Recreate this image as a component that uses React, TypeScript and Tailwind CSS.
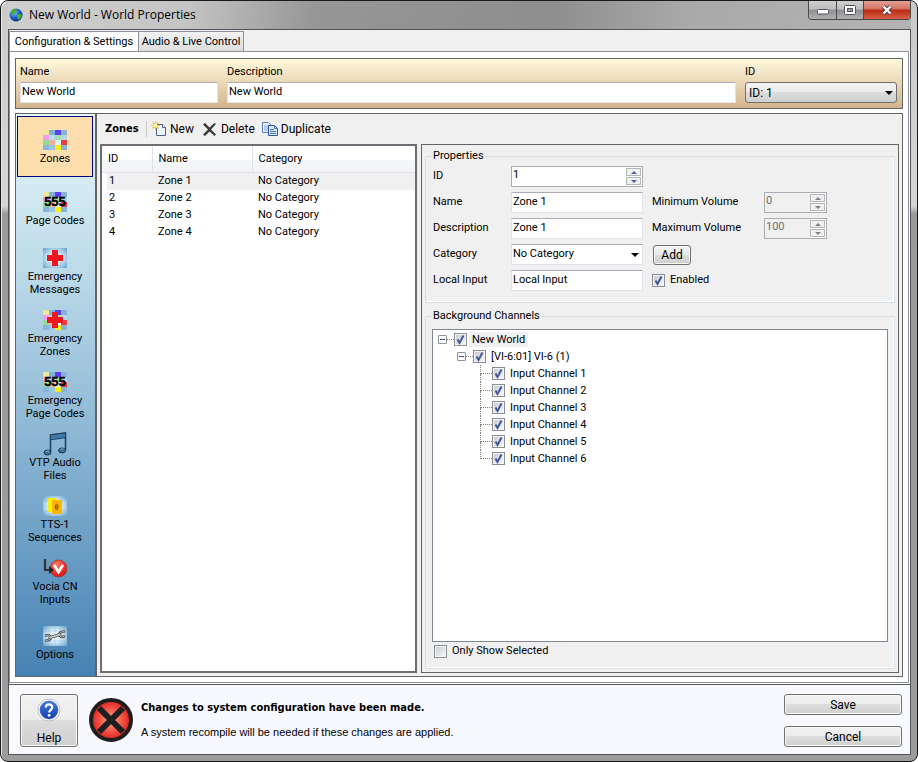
import { useState } from "react";
import type { ReactNode } from "react";
import clsx from "clsx";

const zones = [
  { id: 1, name: "Zone 1", category: "No Category" },
  { id: 2, name: "Zone 2", category: "No Category" },
  { id: 3, name: "Zone 3", category: "No Category" },
  { id: 4, name: "Zone 4", category: "No Category" },
];

const channels = [1, 2, 3, 4, 5, 6].map((n) => `Input Channel ${n}`);

const tiles = [
  ["#efe79a", "#7db3da", "#5b3df2", "#86b4d8"],
  ["#f59df3", "#b4daf0", "#a4e0a0", "#b4d6ec"],
  ["#93dc93", "#f2b196", "#e4f3fb", "#ef3a3c"],
  ["#86b6da", "#9ac7e6", "#fdee05", "#86b2d4"],
];

const Tiles = () => (
  <g>
    {tiles.map((row, y) =>
      row.map((fill, x) => (
        <rect key={`${x}-${y}`} x={x * 6} y={2 + y * 5} width="6" height="5" fill={fill} />
      ))
    )}
  </g>
);

const BlueTile = () => (
  <g>
    <defs>
      <radialGradient id="blueTile" r="0.65">
        <stop offset="0" stopColor="#ffffff" />
        <stop offset="0.5" stopColor="#d3e9f7" />
        <stop offset="1" stopColor="#6fa8d0" />
      </radialGradient>
    </defs>
    <rect y="2" width="24" height="20" fill="url(#blueTile)" />
    <path d="M0 7h24M0 12h24M0 17h24M6 2v20M12 2v20M18 2v20" stroke="#8fbedd" strokeOpacity="0.4" />
  </g>
);

const Cross = () => <path d="M9 4h6v5h5v6h-5v5H9v-5H4V9h5z" fill="#ee1620" />;

const Digits = () => (
  <text x="12" y="16" textAnchor="middle" fontSize="13" fontWeight="700" stroke="#000" strokeWidth="0.4" className="font-['Liberation_Sans',sans-serif]">
    555
  </text>
);

const Icon = ({ children }: { children: ReactNode }) => (
  <svg viewBox="0 0 24 24" className="h-6 w-6 shrink-0" aria-hidden="true">
    {children}
  </svg>
);

const MusicIcon = () => (
  <Icon>
    <defs>
      <linearGradient id="note" x1="0" y1="0" x2="1" y2="1">
        <stop offset="0" stopColor="#1d4566" />
        <stop offset="1" stopColor="#4d8fbe" />
      </linearGradient>
    </defs>
    <path d="M7.500 20V3L22.500 1v17M7.500 7.500l15-2" fill="none" stroke="#1d4566" strokeWidth="1.600" />
    <path d="M8 3.500L22 1.700v3.600L8 7.200z" fill="#3c79a6" />
    <g fill="url(#note)" stroke="#173a56">
      <ellipse cx="4.500" cy="20.500" rx="3.500" ry="2.500" />
      <ellipse cx="19" cy="18.500" rx="3.500" ry="2.500" />
    </g>
    <path d="M2.500 20q1.500-1.500 3.500-1M17 18q1.500-1.500 3.500-1" fill="none" stroke="#8fc0e0" />
  </Icon>
);

const SequenceIcon = () => (
  <Icon>
    <BlueTile />
    <path d="M5 4h8l2 2v12H5z" fill="#f7ee12" />
    <rect x="9" y="6" width="10" height="14" rx="1" fill="#ffb400" />
    <path d="M12 10v6l2-3z" fill="#7a5b00" />
    <path d="M13.500 10q3 3 0 6" fill="none" stroke="#7a5b00" strokeWidth="1.200" />
  </Icon>
);

const VociaIcon = () => (
  <Icon>
    <defs>
      <radialGradient id="vocia" cx="0.4" cy="0.3" r="0.7">
        <stop offset="0" stopColor="#ff7a6a" />
        <stop offset="1" stopColor="#d9130f" />
      </radialGradient>
    </defs>
    <circle cx="15.500" cy="12.500" r="8.500" fill="url(#vocia)" stroke="#a8201c" strokeWidth="0.6" />
    <path d="M11 9l4.500 7L20 9" fill="none" stroke="#fff" strokeWidth="2.600" />
    <path d="M2 3v11h5" fill="none" stroke="#333" strokeWidth="2.200" />
    <path d="M6 10l5 4-5 4z" fill="#222" />
  </Icon>
);

const WrenchIcon = () => (
  <Icon>
    <BlueTile />
    <g fill="none" stroke="#555" strokeLinecap="round">
      <path d="M7 13.500L17 10.500" strokeWidth="3" />
      <path d="M3 11.500q3.500-1.500 4.500 1.500t-4.500 3.500" strokeWidth="2.600" />
      <path d="M21 12.500q-3.500 1.500-4.500-1.500t4.500-3.500" strokeWidth="2.600" />
      <path d="M7 13.500L17 10.500" stroke="#d0d0d0" strokeWidth="1.400" />
      <path d="M3 11.500q3.500-1.500 4.500 1.500t-4.500 3.500" stroke="#b4b4b4" strokeWidth="1" />
      <path d="M21 12.500q-3.500 1.500-4.500-1.500t4.500-3.500" stroke="#b4b4b4" strokeWidth="1" />
    </g>
  </Icon>
);

const menu = [
  { label: ["Zones"], icon: <Icon><Tiles /></Icon> },
  { label: ["Page Codes"], icon: <Icon><Tiles /><Digits /></Icon> },
  { label: ["Emergency", "Messages"], icon: <Icon><BlueTile /><Cross /></Icon> },
  { label: ["Emergency", "Zones"], icon: <Icon><Tiles /><Cross /></Icon> },
  { label: ["Emergency", "Page Codes"], icon: <Icon><Tiles /><Digits /></Icon> },
  { label: ["VTP Audio", "Files"], icon: <MusicIcon /> },
  { label: ["TTS-1", "Sequences"], icon: <SequenceIcon /> },
  { label: ["Vocia CN", "Inputs"], icon: <VociaIcon /> },
  { label: ["Options"], icon: <WrenchIcon /> },
];

const GlobeIcon = () => (
  <svg viewBox="0 0 14 14" className="h-3.5 w-3.5" aria-hidden="true">
    <defs>
      <radialGradient id="globe" cx="0.35" cy="0.3" r="0.8">
        <stop offset="0" stopColor="#8fd0ff" />
        <stop offset="0.5" stopColor="#1f62c9" />
        <stop offset="1" stopColor="#06205e" />
      </radialGradient>
    </defs>
    <circle cx="7" cy="7" r="6.500" fill="url(#globe)" />
    <path d="M2 3q3-3 5-2l1 2-2 2-1 2-3-1zM8 6l4 0 1 2-3 4-2-2z" fill="#3fae3a" />
  </svg>
);

const TitleBar = () => (
  <header className="flex h-7 items-start bg-[linear-gradient(100deg,#cfcfcf_0%,#c4c4c4_20%,#969696_34%,#8e8e8e_60%,#a9a9a9_75%,#b4b4b4_100%)]">
    <div className="flex h-7 flex-1 items-center gap-[6px] pl-px">
      <GlobeIcon />
      <h1 className="font-['Open_Sans',sans-serif] text-[12px] leading-4">New World - World Properties</h1>
    </div>
    <div className="flex h-[19px] overflow-hidden rounded-b-[4px] border border-t-0 border-[#4a4a4a]">
      <button aria-label="Minimize" className="flex w-7 items-center justify-center border-r border-[#4a4a4a] bg-[linear-gradient(#cfcfcf_0%,#bdbdbd_45%,#8f9093_50%,#b0b0b0_100%)]">
        <svg viewBox="0 0 12 6" className="mt-1 h-1.5 w-3"><rect x="0.500" y="0.500" width="11" height="4.500" rx="1" fill="#fff" stroke="#50545c" /></svg>
      </button>
      <button aria-label="Maximize" className="flex w-[27px] items-center justify-center border-r border-[#4a4a4a] bg-[linear-gradient(#cfcfcf_0%,#bdbdbd_45%,#8f9093_50%,#b0b0b0_100%)]">
        <svg viewBox="0 0 12 10" className="h-2.5 w-3">
          <rect x="0.500" y="0.500" width="11" height="9" rx="1" fill="#fff" stroke="#50545c" />
          <rect x="3.500" y="3.500" width="5" height="3" fill="#9a9a9a" stroke="#50545c" />
        </svg>
      </button>
      <button aria-label="Close" className="flex w-[46px] items-center justify-center bg-[linear-gradient(#e3a196_0%,#d4705f_45%,#b92b14_50%,#d9604a_100%)]">
        <svg viewBox="0 0 12 10" className="h-2.5 w-3">
          <path d="M2.500 1.500l7 7M9.500 1.500l-7 7" stroke="#4a3a44" strokeWidth="4.200" />
          <path d="M2.500 1.500l7 7M9.500 1.500l-7 7" stroke="#fff" strokeWidth="2.400" />
        </svg>
      </button>
    </div>
  </header>
);

const Check = ({ id, defaultChecked = false }: { id: string; defaultChecked?: boolean }) => (
  <span className="grid h-[13px] w-[13px] shrink-0 *:col-start-1 *:row-start-1">
    <input
      id={id}
      type="checkbox"
      defaultChecked={defaultChecked}
      className="peer h-[13px] w-[13px] appearance-none border border-[#8a8f94] bg-[linear-gradient(135deg,#c3c8d0,#fafafa)] shadow-[inset_0_0_0_1px_#f4f4f4]"
    />
    <svg viewBox="0 0 13 13" className="pointer-events-none invisible h-[13px] w-[13px] peer-checked:visible">
      <path d="M3.500 6.500l2 3.500L9.500 2.500" fill="none" stroke="#44599a" strokeWidth="2" />
    </svg>
  </span>
);

const inputStyle = "h-[21px] w-full min-w-0 border border-[#e2e3ea] border-t-[#abadb3] bg-white px-px pb-[2px]";

const TextField = ({ id, value }: { id: string; value: string }) => (
  <input id={id} type="text" defaultValue={value} className={inputStyle} />
);

const Arrow = ({ up = false }: { up?: boolean }) => (
  <svg viewBox="0 0 6 3" className="h-[3px] w-1.5 fill-current">
    <path d={up ? "M3 0l3 3H0z" : "M0 0h6L3 3z"} />
  </svg>
);

const Spinner = ({ id, value, disabled = false }: { id: string; value: string; disabled?: boolean }) => (
  <div className={clsx("flex h-[21px] border border-[#abadb3]", disabled ? "text-[#6d6d6d]" : "bg-white")}>
    <input id={id} type="text" defaultValue={value} disabled={disabled} className="w-full min-w-0 flex-1 px-px pb-[2px]" />
    <div className={clsx("flex w-4 flex-col gap-px bg-white py-px pr-px", disabled ? "text-[#808080]" : "text-[#4b63b5]")}>
      <button disabled={disabled} aria-label="Increase" className="flex flex-1 items-center justify-center border border-[#b4b6ba] bg-[#f0f0f0]">
        <Arrow up />
      </button>
      <button disabled={disabled} aria-label="Decrease" className="flex flex-1 items-center justify-center border border-[#b4b6ba] bg-[#f0f0f0]">
        <Arrow />
      </button>
    </div>
  </div>
);

const Select = ({ id, value, className }: { id: string; value: string; className: string }) => (
  <div className="grid h-[21px] items-center *:col-start-1 *:row-start-1">
    <select id={id} defaultValue={value} className={clsx("h-[21px] w-full appearance-none border", className)}>
      <option>{value}</option>
    </select>
    <svg viewBox="0 0 8 4" className="pointer-events-none mr-1 h-1 w-2 justify-self-end">
      <path d="M0 0h8L4 4z" />
    </svg>
  </div>
);

const buttonStyle = "rounded-[3px] border border-[#707070] bg-[linear-gradient(#f2f2f2_0%,#ebebeb_49%,#dddddd_50%,#cfcfcf_100%)] shadow-[inset_0_0_0_1px_#f8f8f8]";

const WorldHeader = () => (
  <section className="flex gap-[9px] border border-[#646464] bg-[linear-gradient(#fff8dc,#d2b48c)] px-[5px] py-[5px] pl-1">
    <div className="flex w-[198px] flex-col gap-[2px]">
      <label htmlFor="world-name" className="leading-4">Name</label>
      <TextField id="world-name" value="New World" />
    </div>
    <div className="flex flex-1 flex-col gap-[2px]">
      <label htmlFor="world-description" className="leading-4">Description</label>
      <TextField id="world-description" value="New World" />
    </div>
    <div className="flex w-[152px] flex-col gap-[2px]">
      <label htmlFor="world-id" className="leading-4">ID</label>
      <Select
        id="world-id"
        value="ID: 1"
        className="rounded-[3px] border-[#707070] bg-[linear-gradient(#f2f2f2_0%,#ebebeb_49%,#dddddd_50%,#cfcfcf_100%)] px-[3px] text-[12px]"
      />
    </div>
  </section>
);

const SideMenu = () => {
  const [active, setActive] = useState(0);
  return (
    <nav className="flex w-[81px] shrink-0 flex-col border-r-2 border-[#646464] bg-[linear-gradient(#e6f8fa,#b9d8e8_30%,#4682b4)] pt-[2px] pr-[2px] pl-px">
      {menu.map((item, i) => (
        <button
          key={item.label.join(" ")}
          onClick={() => setActive(i)}
          className={clsx(
            "mb-px flex h-[61px] flex-col items-center justify-center border leading-[13px]",
            i === active ? "border-[#000080] bg-[#ffdead]" : "border-transparent"
          )}
        >
          {item.icon}
          {item.label.map((line) => (
            <span key={line}>{line}</span>
          ))}
        </button>
      ))}
    </nav>
  );
};

const Toolbar = () => (
  <div className="flex h-[30px] items-center pl-[5px] text-[12px]">
    <h2 className="w-[42px] border-r border-[#c8c8c8] font-['DejaVu_Sans_Condensed','DejaVu_Sans',sans-serif] text-[11px] font-bold">Zones</h2>
    <button className="ml-1 flex items-center gap-[3px]">
      <svg viewBox="0 0 16 16" className="h-4 w-4" aria-hidden="true">
        <path d="M5.500 3.500h6l3 3v8h-9z" fill="#eef4fc" stroke="#4a5f8a" />
        <path d="M11.500 3.500v3h3" fill="#fff" stroke="#4a5f8a" />
        <path d="M4.500 0v9M0 4.500h9M1.500 1.500l6 6M7.500 1.500l-6 6" stroke="#f0c63c" strokeWidth="1.200" />
        <circle cx="4.500" cy="4.500" r="1.800" fill="#fff6b0" />
      </svg>
      New
    </button>
    <button className="ml-2 flex items-center gap-1">
      <svg viewBox="0 0 15 15" className="h-[15px] w-[15px]" aria-hidden="true">
        <path d="M1 2.500L3 1l4.500 4.500L12.500 1l1.500 1L9 7.500l5 5-1.500 1.500-5-4.500L3 14l-2-1.500L6 7.500z" fill="#3a3a3a" />
      </svg>
      Delete
    </button>
    <button className="ml-[7px] flex items-center gap-[3px]">
      <svg viewBox="0 0 16 16" className="h-4 w-4" aria-hidden="true">
        <path d="M0.500 1.500h6l3 3v7h-9z" fill="#eef4ff" stroke="#5b7fc0" />
        <path d="M2 5h5M2 7h5M2 9h5" stroke="#7fa2dc" />
        <path d="M6.500 4.500h6l3 3v7h-9z" fill="#dfeaff" stroke="#2f57a6" />
        <path d="M12.500 4.500v3h3M8 8.500h4M8 10.500h6M8 12.500h6" fill="none" stroke="#4573c4" />
      </svg>
      Duplicate
    </button>
  </div>
);

const ZoneTable = () => (
  <div className="w-[317px] shrink-0 border-2 border-[#6b6f74] bg-white">
    <table className="w-full table-fixed border-collapse text-left">
      <thead>
        <tr className="h-[26px] bg-[linear-gradient(#ffffff_50%,#f5f6f8_55%,#f3f4f6_100%)]">
          <th className="w-[50px] border-r border-b border-[#dfe3e8] pl-[6px] font-normal">ID</th>
          <th className="w-[100px] border-r border-b border-[#dfe3e8] pl-[6px] font-normal">Name</th>
          <th className="border-b border-[#dfe3e8] pl-[6px] font-normal">Category</th>
        </tr>
      </thead>
      <tbody>
        {zones.map((zone, i) => (
          <tr key={zone.id} className="h-[17px]">
            <td className="pl-[5px]"><div className={clsx("h-[17px] pl-[2px] leading-4", i === 0 && "bg-[#f0f0f0]")}>{zone.id}</div></td>
            <td><div className={clsx("h-[17px] pl-[6px] leading-4", i === 0 && "bg-[#f0f0f0]")}>{zone.name}</div></td>
            <td><div className={clsx("h-[17px] pl-[6px] leading-4", i === 0 && "bg-[#f0f0f0]")}>{zone.category}</div></td>
          </tr>
        ))}
      </tbody>
    </table>
  </div>
);

const groupStyle = "min-w-0 border border-[#d5dfe5] shadow-[inset_-1px_-1px_0_#ffffff]";
const legendStyle = "px-px leading-[14px]";

const Properties = () => (
  <fieldset className={clsx(groupStyle, "rounded-[2px] px-[6px] pb-[11px]")}>
    <legend className={legendStyle}>Properties</legend>
    <div className="grid auto-rows-[21px] grid-cols-[79px_132px_8px_113px_63px] items-center gap-y-[5px] pt-[3px] *:[label]:pb-px *:[label]:pl-px">
      <label htmlFor="zone-id">ID</label>
      <Spinner id="zone-id" value="1" />
      <label htmlFor="zone-name" className="col-start-1">Name</label>
      <TextField id="zone-name" value="Zone 1" />
      <label htmlFor="min-volume" className="col-start-4">Minimum Volume</label>
      <Spinner id="min-volume" value="0" disabled />
      <label htmlFor="zone-description" className="col-start-1">Description</label>
      <TextField id="zone-description" value="Zone 1" />
      <label htmlFor="max-volume" className="col-start-4">Maximum Volume</label>
      <Spinner id="max-volume" value="100" disabled />
      <label htmlFor="zone-category" className="col-start-1">Category</label>
      <Select id="zone-category" value="No Category" className="border-[#e2e3ea] border-t-[#abadb3] bg-white px-px" />
      <button type="button" className={clsx(buttonStyle, "col-start-4 ml-[2px] h-5 w-[38px] text-[12px]")}>Add</button>
      <label htmlFor="local-input" className="col-start-1">Local Input</label>
      <TextField id="local-input" value="Local Input" />
      <div className="col-start-4 flex items-center gap-[5px] pl-px">
        <Check id="enabled" defaultChecked />
        <label htmlFor="enabled">Enabled</label>
      </div>
    </div>
  </fieldset>
);

const Expander = ({ label }: { label: string }) => (
  <>
    <button aria-label={label} className="flex h-[9px] w-[9px] items-center justify-center rounded-[1px] border border-[#919191] bg-white">
      <span className="h-px w-[5px] bg-[#3c50a0]" />
    </button>
    <span className="w-[7px] border-t border-dotted border-[#808080]" />
  </>
);

const ChannelTree = () => (
  <ul className="flex-1 border border-[#828790] bg-white pt-px pl-[5px]">
    <li>
      <div className="flex h-[17px] items-center">
        <Expander label="Collapse New World" />
        <Check id="tree-world" defaultChecked />
        <label htmlFor="tree-world" className="ml-[2px] bg-[#f0f0f0] px-[3px] leading-[15px]">New World</label>
      </div>
      <ul className="pl-[19px]">
        <li>
          <div className="flex h-[17px] items-center">
            <Expander label="Collapse VI-6" />
            <Check id="tree-device" defaultChecked />
            <label htmlFor="tree-device" className="ml-[5px] leading-[15px]">[VI-6:01] VI-6 (1)</label>
          </div>
          <ul className="pl-[23px]">
            {channels.map((channel, i) => (
              <li key={channel} className="flex h-[17px] items-center">
                <span className="flex h-[17px] w-3 flex-col">
                  <span className="h-[9px] border-b border-l border-dotted border-[#808080]" />
                  {i < channels.length - 1 && <span className="flex-1 border-l border-dotted border-[#808080]" />}
                </span>
                <Check id={`tree-${i}`} defaultChecked />
                <label htmlFor={`tree-${i}`} className="ml-[5px] leading-[15px]">{channel}</label>
              </li>
            ))}
          </ul>
        </li>
      </ul>
    </li>
  </ul>
);

const BackgroundChannels = () => (
  <fieldset className={clsx(groupStyle, "flex flex-1 flex-col rounded-[2px] px-[6px] pt-[6px] pb-[10px]")}>
    <legend className={legendStyle}>Background Channels</legend>
    <ChannelTree />
    <div className="mt-[2px] flex items-center gap-[5px] pl-[2px]">
      <Check id="only-selected" />
      <label htmlFor="only-selected" className="leading-[14px]">Only Show Selected</label>
    </div>
  </fieldset>
);

const Footer = () => (
  <footer className="flex items-start border-t border-[#5a5a5a] bg-[#f8f8ff] pt-[9px] pr-2 pb-[7px] pl-[11px]">
    <button className={clsx(buttonStyle, "flex h-[53px] w-[58px] flex-col items-center justify-between pt-[3px] text-[12px] leading-4")}>
      <svg viewBox="0 0 24 24" className="h-6 w-6" aria-hidden="true">
        <defs>
          <linearGradient id="help" x1="0" y1="0" x2="0" y2="1">
            <stop offset="0" stopColor="#3f7be0" />
            <stop offset="1" stopColor="#1a3fae" />
          </linearGradient>
        </defs>
        <circle cx="12" cy="12" r="11" fill="#fff" stroke="#b9c0cc" />
        <circle cx="12" cy="12" r="9" fill="url(#help)" stroke="#2a4fae" strokeWidth="0.6" />
        <path d="M8.800 9.500c0-4.200 6.600-4.200 6.400 0c0 2.300-3 2.400-3 5" fill="none" stroke="#fff" strokeWidth="2.200" />
        <circle cx="12.100" cy="17.400" r="1.400" fill="#fff" />
      </svg>
      Help
    </button>
    <svg viewBox="0 0 44 44" className="mt-1 ml-[11px] h-11 w-11" aria-hidden="true">
      <defs>
        <radialGradient id="stop">
          <stop offset="0" stopColor="#ffa080" />
          <stop offset="0.7" stopColor="#f0453a" />
          <stop offset="1" stopColor="#d81f1c" />
        </radialGradient>
      </defs>
      <circle cx="22" cy="22" r="20" fill="url(#stop)" stroke="#1e1e1e" strokeWidth="4" />
      <path d="M10 10l24 24M34 10L10 34" stroke="#1e1e1e" strokeWidth="6" />
    </svg>
    <div className="ml-2 flex-1 pt-[6px]">
      <p className="font-['DejaVu_Sans_Condensed','DejaVu_Sans',sans-serif] leading-4 font-bold">Changes to system configuration have been made.</p>
      <p className="mt-2 font-['Liberation_Sans',sans-serif] leading-4">A system recompile will be needed if these changes are applied.</p>
    </div>
    <div className="flex w-[118px] flex-col gap-[11px] text-[12px]">
      <button className={clsx(buttonStyle, "h-[21px]")}>Save</button>
      <button className={clsx(buttonStyle, "h-[21px]")}>Cancel</button>
    </div>
  </footer>
);

export default function App() {
  return (
    <div className="flex min-h-screen flex-col overflow-hidden rounded-lg border border-[#1a1a1a] bg-[linear-gradient(#cacaca_0%,#d6d6d6_27%,#9a9a9a_28%,#9c9c9c_100%)] pr-[6px] pb-[6px] pl-[7px] font-[Roboto,sans-serif] text-[11px] text-black shadow-[inset_1px_1px_0_#e6e6e6]">
      <TitleBar />
      <main className="flex flex-1 flex-col border border-[#505357] bg-white">
        <div role="tablist" className="flex h-[21px] items-end bg-[#f0f0f0]">
          <button role="tab" aria-selected="true" className="-mb-px h-[21px] w-[130px] border border-b-0 border-[#8c9098] bg-white">
            Configuration &amp; Settings
          </button>
          <button role="tab" aria-selected="false" className="h-5 w-[105px] border border-b-0 border-l-0 border-[#8c9098] bg-[linear-gradient(#f2f2f2,#dddddd)] pt-[2px]">
            Audio &amp; Live Control
          </button>
        </div>
        <div className="mr-px mb-px flex flex-1 flex-col gap-1 border border-[#8c9098] p-[5px] pt-[6px]">
          <WorldHeader />
          <section className="flex flex-1 border border-[#646464] bg-[#f0f0f0]">
            <SideMenu />
            <div className="flex min-w-0 flex-1 flex-col px-[3px] pb-[3px]">
              <Toolbar />
              <div className="flex flex-1 gap-1">
                <ZoneTable />
                <div className="flex min-w-0 flex-1 flex-col gap-[6px] border border-[#646464] px-[3px] pt-1 pb-[3px]">
                  <Properties />
                  <BackgroundChannels />
                </div>
              </div>
            </div>
          </section>
        </div>
        <Footer />
      </main>
    </div>
  );
}
